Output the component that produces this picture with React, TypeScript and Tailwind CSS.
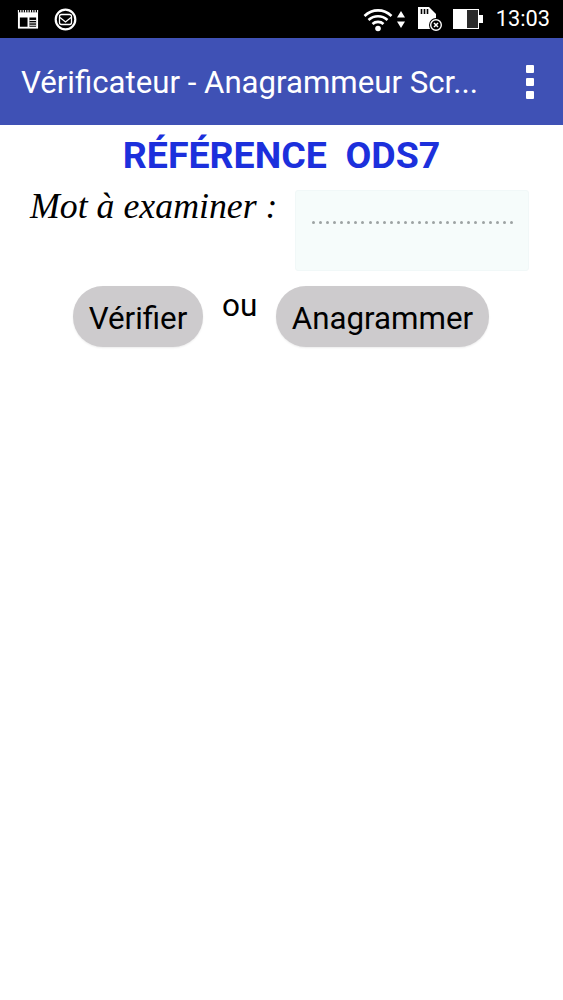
export default function App() {
  const dots = Array.from({ length: 29 });
  return (
    <div className="w-[563px] h-[1000px] bg-white flex flex-col overflow-hidden font-['Roboto',sans-serif]">
      <div className="h-[38px] bg-black flex items-center text-white shrink-0">
        <svg className="ml-[17px]" width="22" height="21" viewBox="0 0 23 21" fill="none">
          <path d="M1 3h21v17H1z" fill="#fff" />
          <path d="M1.500 .5v3M4 .5v3M6.500 .5v3M9 .5v3M11.500 .5v3M14 .5v3M16.500 .5v3M19 .5v3M21.500 .5v3" stroke="#fff" strokeWidth="1.200" />
          <path d="M3 8.500h8v9.500H3zM13 8.500h7v9.500h-7z" fill="#000" />
          <path d="M13 11.500h7M13 14h7M13 16.500h7" stroke="#fff" strokeWidth="1" />
        </svg>
        <svg className="ml-[15px]" width="23" height="23" viewBox="0 0 23 23" fill="none">
          <circle cx="11.500" cy="11.500" r="9.800" stroke="#fff" strokeWidth="2.200" />
          <rect x="5.500" y="6.500" width="12" height="10" rx="2" stroke="#fff" strokeWidth="1.300" />
          <path d="M6 9.500l5.500 4.500 5.500-4.500" stroke="#fff" strokeWidth="1.300" />
        </svg>
        <svg className="ml-auto" width="30" height="25" viewBox="0 0 30 25" fill="none">
          <path d="M1.500 9C9.500 1.500 20.500 1.500 28.500 9M5.500 13c5.500-5 13.500-5 19 0M9.500 17c3-2.800 8-2.800 11 0" stroke="#fff" strokeWidth="2.600" />
          <circle cx="15" cy="21.500" r="2.800" fill="#fff" />
        </svg>
        <svg className="ml-[4px]" width="8" height="19" viewBox="0 0 8 19">
          <path d="M4 1l4 6.500H0zM4 18L0 11.500h8z" fill="#fff" />
        </svg>
        <svg className="ml-[12px]" width="26" height="26" viewBox="0 0 26 26">
          <path d="M1 1h11l7 7v15H1z" fill="#fff" />
          <path d="M4.500 3v5M7.500 3v5M10.500 3v5" stroke="#000" strokeWidth="1.600" />
          <circle cx="19" cy="19" r="7" fill="#000" />
          <circle cx="19" cy="19" r="5.300" fill="none" stroke="#fff" strokeWidth="1.400" />
          <path d="M17 17l4 4M21 17l-4 4" stroke="#fff" strokeWidth="1.500" />
        </svg>
        <svg className="ml-[10px]" width="30" height="20" viewBox="0 0 30 20">
          <path d="M0 0h26v20H0z" fill="#fff" />
          <path d="M14 1h11v18H14z" fill="#2a2a2a" />
          <path d="M26 6h4v8h-4z" fill="#fff" />
        </svg>
        <span className="ml-[13px] mr-[13px] text-[21.800px] leading-none">13:03</span>
      </div>
      <div className="h-[87px] bg-[#3f51b5] flex items-center shrink-0 text-white">
        <span className="ml-[21px] mt-[2px] text-[31.200px] leading-none whitespace-nowrap">Vérificateur - Anagrammeur Scr...</span>
        <div className="ml-auto mr-[29px] flex flex-col gap-[5px]">
          <div className="w-[8px] h-[8px] bg-white rounded-[1px]" />
          <div className="w-[8px] h-[8px] bg-white rounded-[1px]" />
          <div className="w-[8px] h-[8px] bg-white rounded-[1px]" />
        </div>
      </div>
      <h1 className="mt-[9px] text-center text-[#1c30dc] font-bold text-[37.500px] leading-[42px] whitespace-pre">RÉFÉRENCE  ODS7</h1>
      <div className="flex mt-[14px] items-start">
        <span className="ml-[30px] w-[265px] -mt-[2px] text-[35.800px] leading-[36px] italic text-black font-['Liberation_Serif',serif] whitespace-nowrap">Mot à examiner :</span>
        <div className="w-[234px] h-[81px] bg-[#f6fcfb] border border-[#f1f8f8] rounded-[3px] flex items-start justify-between pl-[16px] pr-[15px] pt-[30px]">
          {dots.map((_, i) => (
            <div key={i} className="w-[3px] h-[3px] rounded-full bg-[#9da3a3]" />
          ))}
        </div>
      </div>
      <div className="flex mt-[15px] items-start">
        <button className="ml-[73px] w-[130px] h-[61px] pt-[5px] rounded-[30px] bg-[#cdcbcd] text-black text-[31.300px] leading-none shadow-[0_1px_2px_rgba(0,0,0,0.08)]">Vérifier</button>
        <span className="ml-[19px] w-[54px] mt-[1px] text-[31.500px] leading-[38px] text-black">ou</span>
        <button className="w-[213px] h-[61px] pt-[5px] rounded-[30px] bg-[#cdcbcd] text-black text-[31.300px] leading-none shadow-[0_1px_2px_rgba(0,0,0,0.08)]">Anagrammer</button>
      </div>
    </div>
  );
}
